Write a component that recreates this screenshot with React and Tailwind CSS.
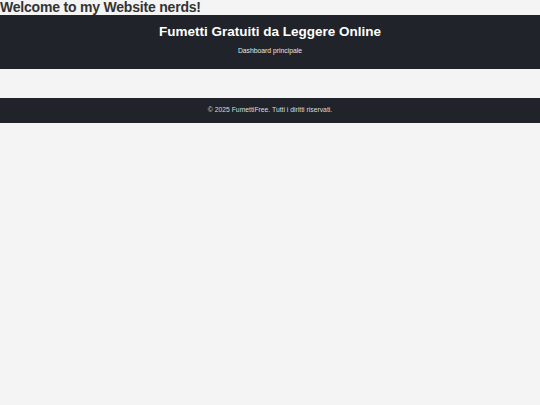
export default function App() {
  return (
    <div className="min-h-[405px] bg-[#f4f4f4] font-['Liberation_Sans',Arial,sans-serif] text-[#333]">
      <h1 className="text-[14px] font-bold leading-[15px] tracking-[-0.2px] text-[#333]">Welcome to my Website nerds!</h1>
      <header className="bg-[#20232a] text-white text-center pt-[8px] pb-[14px]">
        <h2 className="text-[13.5px] font-bold leading-[17px]">Fumetti Gratuiti da Leggere Online</h2>
        <p className="text-[6.8px] leading-[9px] mt-[6px] text-[#e5e5e5]">Dashboard principale</p>
      </header>
      <main className="h-[29px]"></main>
      <footer className="bg-[#20232a] text-[#dcdcdc] text-center h-[25px] flex items-center justify-center">
        <p className="text-[6.8px]">© 2025 FumettiFree. Tutti i diritti riservati.</p>
      </footer>
    </div>
  );
}
